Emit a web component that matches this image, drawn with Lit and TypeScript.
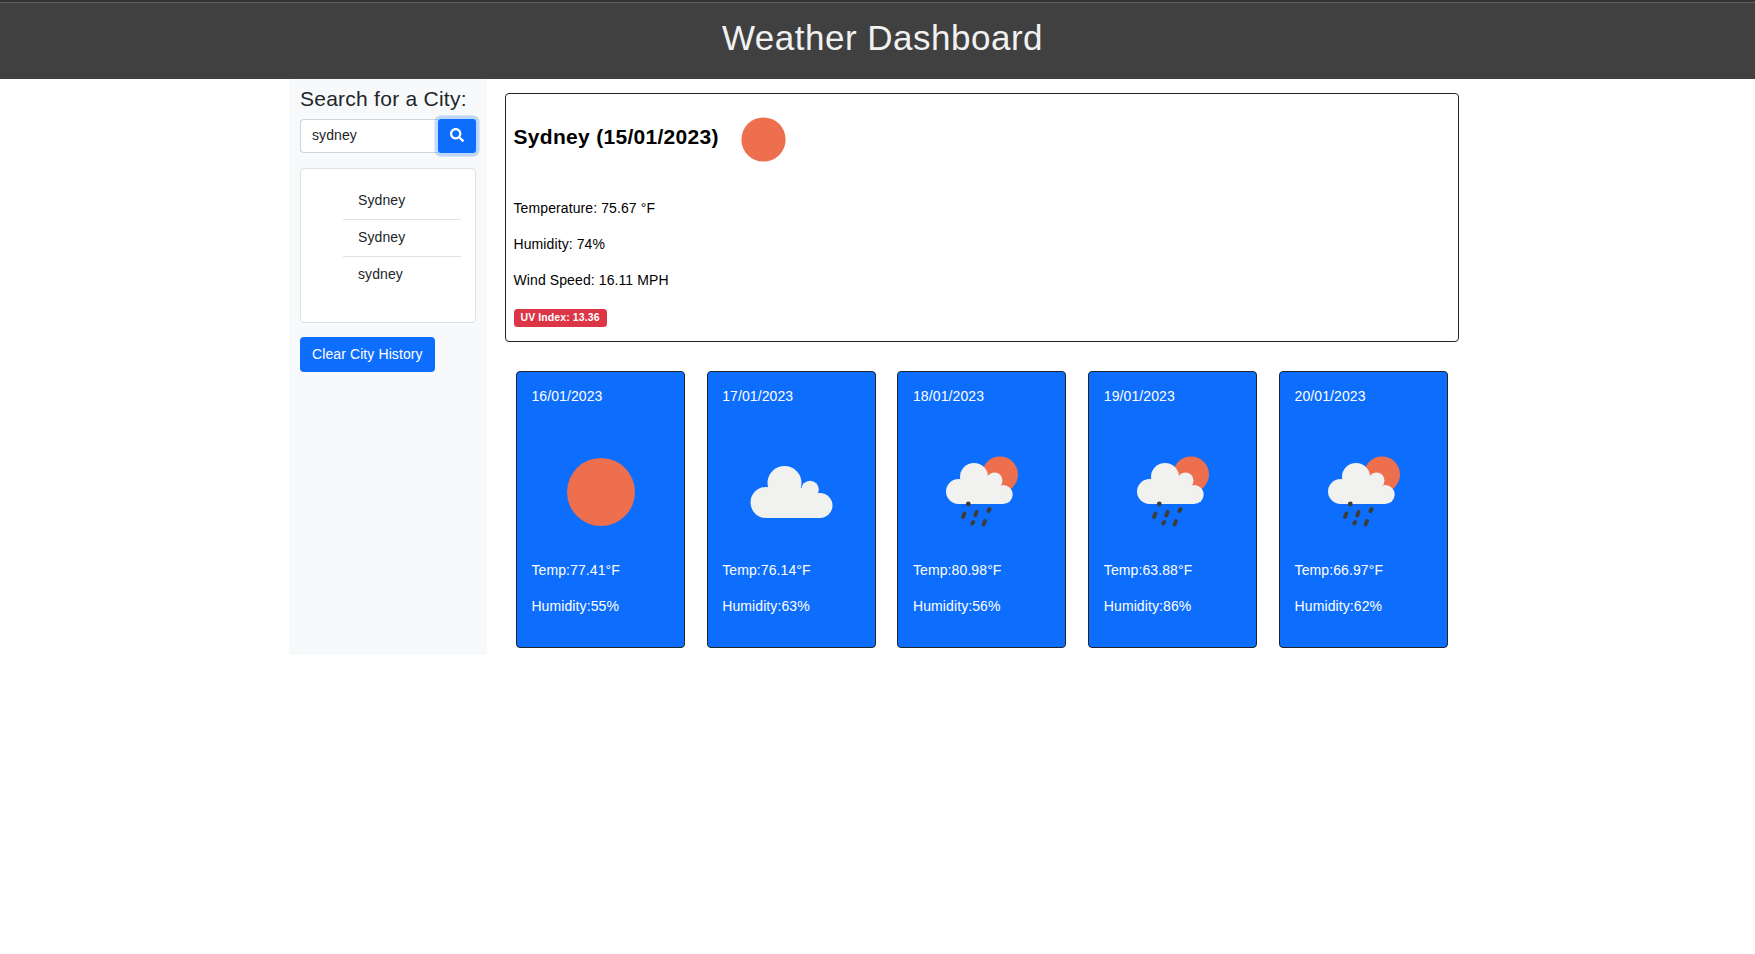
import { LitElement, html, svg, css } from "lit";
import { customElement } from "lit/decorators.js";

type IconKind = "sun" | "cloud" | "rain";

const history = ["Sydney", "Sydney", "sydney"];

const forecast: { date: string; icon: IconKind; temp: string; humidity: string }[] = [
    { date: "16/01/2023", icon: "sun", temp: "77.41", humidity: "55" },
    { date: "17/01/2023", icon: "cloud", temp: "76.14", humidity: "63" },
    { date: "18/01/2023", icon: "rain", temp: "80.98", humidity: "56" },
    { date: "19/01/2023", icon: "rain", temp: "63.88", humidity: "86" },
    { date: "20/01/2023", icon: "rain", temp: "66.97", humidity: "62" },
];

const drops = [
    [31, 75, 32.5, 71.5],
    [43.2, 73.5, 44.7, 70],
    [56.5, 69, 57.5, 67],
    [40.2, 81.5, 41.2, 80],
    [51.5, 82.5, 53, 79],
];

function weatherIcon(kind: IconKind, size: number) {
    const shapes = {
        sun: svg`<circle cx="50" cy="50" r="34" fill="#ee6f4e" />`,
        cloud: svg`<g fill="#f1f1f0">
            <circle cx="25" cy="60.5" r="15.5" />
            <circle cx="43.5" cy="41" r="17" />
            <circle cx="69" cy="47.5" r="8.8" />
            <circle cx="79" cy="63.5" r="12.5" />
            <rect x="25" y="56" width="54" height="20" />
            <rect x="43.5" y="46" width="25.5" height="12" />
        </g>`,
        rain: svg`<circle cx="68" cy="32.4" r="18" fill="#ee6f4e" />
        <g fill="#f1f1f0">
            <circle cx="26.5" cy="49.5" r="12.5" />
            <circle cx="42" cy="35" r="14" />
            <circle cx="62.5" cy="38.5" r="8" />
            <circle cx="71.2" cy="52.5" r="9.5" />
            <rect x="26.5" y="45" width="44.7" height="17" />
            <rect x="42" y="36" width="20.5" height="10" />
        </g>
        <circle cx="36.3" cy="62" r="2.4" fill="#3d3d3d" />
        <g stroke="#3d3d3d" stroke-width="4" stroke-linecap="round">
            ${drops.map(([x1, y1, x2, y2]) => svg`<line x1=${x1} y1=${y1} x2=${x2} y2=${y2} />`)}
        </g>`,
    };
    return html`<svg class="weather-icon" width=${size} height=${size} viewBox="0 0 100 100">${shapes[kind]}</svg>`;
}

@customElement("app-root")
export class AppRoot extends LitElement {
    static override styles = css`
        :host {
            display: block;
            min-height: 954px;
            background: #fff;
            color: #212529;
            font-family: "Liberation Sans", Arial, sans-serif;
            font-size: 14px;
            line-height: 21px;
            letter-spacing: 0.1px;
        }

        * {
            box-sizing: border-box;
        }

        .header {
            height: 79px;
            background: #404040;
            border-top: 2px solid #333;
            box-shadow: inset 0 1px 0 #5c5c5c;
            color: #f1f1f1;
            font-size: 35px;
            letter-spacing: 0.5px;
            line-height: 42px;
            text-align: center;
            padding: 15px 0 0 10px;
        }

        .container {
            width: 1177px;
            margin: 0 auto;
            display: grid;
            grid-template-columns: 198px 1fr;
            align-items: start;
        }

        .sidebar {
            align-self: stretch;
            background: #f8f9fa;
            padding: 7px 11px 0;
        }

        .sidebar h2 {
            margin: 0 0 8px;
            font-size: 21px;
            font-weight: 400;
            letter-spacing: 0.25px;
            line-height: 25px;
        }

        .search {
            display: flex;
            height: 34px;
            margin-bottom: 15px;
        }

        .search input {
            flex: 1;
            min-width: 0;
            padding: 0 11px 2px;
            border: 1px solid #ced4da;
            border-right: none;
            border-radius: 4px 0 0 4px;
            background: #fff;
            color: #212529;
            font: inherit;
            letter-spacing: inherit;
            outline: none;
        }

        .search button {
            width: 38px;
            border: none;
            border-radius: 3px;
            background: #0d6efd;
            box-shadow: 0 0 0 3.5px rgba(13, 110, 253, 0.25);
            display: flex;
            align-items: center;
            justify-content: center;
            padding: 0 0 2px;
        }

        .history {
            background: #fff;
            border: 1px solid #dee2e6;
            border-radius: 4px;
            padding: 14px;
            margin-bottom: 14px;
        }

        .history ul {
            list-style: none;
            margin: 0 0 15px;
            padding: 0 0 0 28px;
        }

        .history li {
            padding: 7px 14px 8px 15px;
            border-bottom: 1px solid #dee2e6;
        }

        .history li:last-child {
            border-bottom: none;
        }

        .clear {
            display: block;
            height: 35px;
            padding: 0 12px;
            border: none;
            border-radius: 4px;
            background: #0d6efd;
            color: #fff;
            font: inherit;
            letter-spacing: inherit;
        }

        .main {
            padding: 14px 7px 7px 18px;
        }

        .today {
            height: 249px;
            border: 1px solid #212529;
            border-radius: 4px;
            padding: 13px 7.5px;
            color: #000;
        }

        .today-title {
            display: flex;
            align-items: center;
            gap: 12.5px;
            height: 64px;
            margin-bottom: 27px;
        }

        .today-title h3 {
            margin: 0;
            padding-bottom: 5px;
            font-size: 21px;
            font-weight: 700;
            letter-spacing: 0.3px;
            line-height: 25px;
        }

        .today p {
            margin: 0 0 15px;
        }

        .badge {
            display: inline-block;
            margin-top: 3px;
            height: 18px;
            padding: 0 7px;
            border-radius: 3.5px;
            background: #dc3545;
            color: #fff;
            font-size: 10.5px;
            font-weight: 700;
            line-height: 17px;
            vertical-align: top;
        }

        .forecast {
            display: flex;
            justify-content: space-around;
            margin-top: 29px;
        }

        .day {
            width: 169px;
            height: 277px;
            display: flex;
            flex-direction: column;
            border: 1px solid #212529;
            border-radius: 4px;
            background: #0d6efd;
            color: #fff;
            padding: 14px 15px 14px 14.5px;
        }

        .day p {
            margin: 0 0 15px;
        }

        .day .date {
            margin-bottom: 34.5px;
        }

        .day .weather-icon {
            align-self: center;
            margin: 0 0 18.5px 1px;
        }

        .weather-icon {
            display: block;
            flex: none;
        }
    `;

    override render () {
        return html`
            <div class="header">Weather Dashboard</div>
            <div class="container">
                <aside class="sidebar">
                    <h2>Search for a City:</h2>
                    <div class="search">
                        <input type="text" .value=${"sydney"} />
                        <button aria-label="Search">
                            <svg width="14" height="14" viewBox="0 0 512 512" fill="#fff">
                                <path d="M505 442.7L405.3 343c-4.5-4.5-10.6-7-17-7H372c27.6-35.3 44-79.7 44-128C416 93.1 322.9 0 208 0S0 93.1 0 208s93.1 208 208 208c48.3 0 92.7-16.4 128-44v16.3c0 6.4 2.5 12.5 7 17l99.7 99.7c9.4 9.4 24.6 9.4 33.9 0l28.3-28.3c9.4-9.4 9.4-24.6.1-34zM208 336c-70.7 0-128-57.2-128-128 0-70.7 57.2-128 128-128 70.7 0 128 57.2 128 128 0 70.7-57.2 128-128 128z" />
                            </svg>
                        </button>
                    </div>
                    <div class="history">
                        <ul>${history.map((city) => html`<li>${city}</li>`)}</ul>
                    </div>
                    <button class="clear">Clear City History</button>
                </aside>
                <main class="main">
                    <section class="today">
                        <div class="today-title">
                            <h3>Sydney (15/01/2023)</h3>
                            ${weatherIcon("sun", 65)}
                        </div>
                        <p>Temperature: 75.67 °F</p>
                        <p>Humidity: 74%</p>
                        <p>Wind Speed: 16.11 MPH</p>
                        <span class="badge">UV Index: 13.36</span>
                    </section>
                    <section class="forecast">
                        ${forecast.map((day) => html`
                            <article class="day">
                                <p class="date">${day.date}</p>
                                ${weatherIcon(day.icon, 100)}
                                <p>Temp:${day.temp}°F</p>
                                <p>Humidity:${day.humidity}%</p>
                            </article>
                        `)}
                    </section>
                </main>
            </div>
        `;
    }
}
